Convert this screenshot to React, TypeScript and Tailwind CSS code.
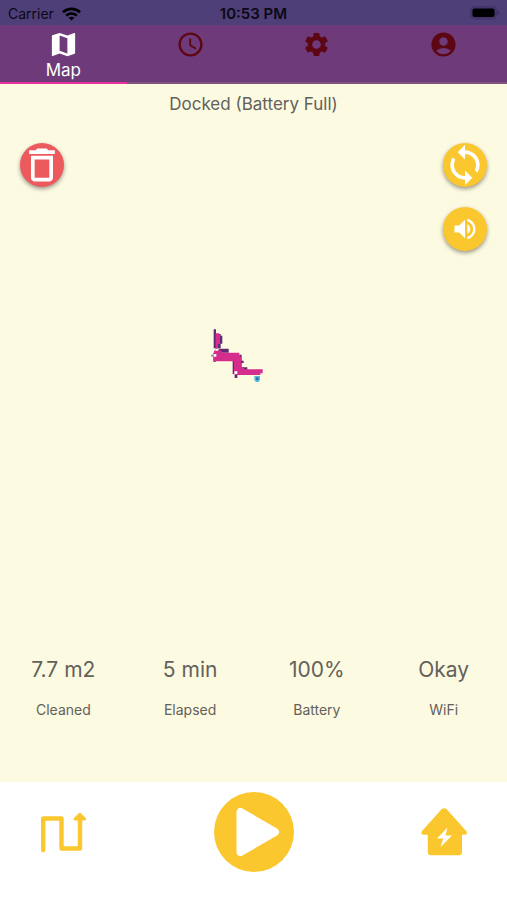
import React from 'react';
import {
  MdAccessTime,
  MdAccountCircle,
  MdDeleteOutline,
  MdLoop,
  MdMap,
  MdSettings,
  MdVolumeUp,
} from 'react-icons/md';

const stats = [
  { value: '7.7 m2', label: 'Cleaned' },
  { value: '5 min', label: 'Elapsed' },
  { value: '100%', label: 'Battery' },
  { value: 'Okay', label: 'WiFi' },
];

const idleTabs = [
  { name: 'Schedule', Icon: MdAccessTime },
  { name: 'Settings', Icon: MdSettings },
  { name: 'Account', Icon: MdAccountCircle },
];

function StatusBar() {
  return (
    <div className="grid h-[25px] grid-cols-3 items-center bg-[#4f3f78] px-2 text-sm text-[#0b0814]">
      <div className="flex items-center gap-2 pt-0.5">
        <span>Carrier</span>
        <svg width="19" height="14" viewBox="0 0 19 14" fill="none" stroke="#000" strokeWidth="2.6" aria-hidden="true">
          <path d="M1 5.2C5.800.7 13.200.7 18 5.200" />
          <path d="M4.200 8.600c3-2.800 7.600-2.800 10.600 0" />
          <path d="M9.500 13.600 6.600 10.800c1.700-1.400 4.100-1.400 5.800 0z" fill="#000" stroke="none" />
        </svg>
      </div>
      <span className="pt-0.5 text-center text-[15px] font-semibold whitespace-nowrap">10:53 PM</span>
      <svg className="justify-self-end" width="29" height="14" viewBox="0 0 29 14" aria-hidden="true">
        <rect x="0.5" y="0.5" width="26" height="12.5" rx="4" fill="#43356a" stroke="#43356a" />
        <rect x="2.5" y="2.5" width="22" height="8.5" rx="2" fill="#000" />
        <path d="M27.500 4.500c1.800.6 1.800 4 0 4.600z" fill="#352a55" />
      </svg>
    </div>
  );
}

function TabBar() {
  return (
    <nav className="grid h-[59px] grid-cols-4 bg-[#6e3a79]">
      <button type="button" className="flex flex-col items-center border-b-2 border-[#e6339a] pt-1 text-white">
        <MdMap size={31} />
        <span className="text-[17px] leading-5">Map</span>
      </button>
      {idleTabs.map(({ name, Icon }) => (
        <button key={name} type="button" aria-label={name} className="flex justify-center border-b-2 border-[#815180] pt-[5px] text-[#5c0713]">
          <Icon size={29} />
        </button>
      ))}
    </nav>
  );
}

function CleaningMap() {
  return (
    <svg width="75" height="70" viewBox="0 0 225 210" role="img" aria-label="Cleaned area">
      <path
        fill="#5f2b73"
        d="M41 28h7v14h14v5h5v24h-5v14H41zM56 86h30v12H56zM40 98h8v27h-8zM98 120h8v42h-8zM118 104h7v18h6v7h-6v13h17v8h-24zM104 158h8v16h-8z"
      />
      <path fill="#d52d8d" d="M47 40h10l3 8v24h-6v18h7l7 8h50v8l5 5v31h9v6h56v12h-7v5H104v-6h-2v-35H42V92h5z" />
      <path fill="#8f78ae" d="M34 104h7v6h-7z" />
      <path fill="#fff" d="M41 102h8v8h-8zM48 86h6v6h-6zM103 154h9v8h-9z" />
      <path fill="#54b7dc" d="M163 168h17v12l-5 6h-7l-5-6z" />
      <path fill="#286fae" d="M168 172h7v8h-7z" />
    </svg>
  );
}

export default function App() {
  const round =
    'flex size-11 items-center justify-center rounded-full text-white shadow-[0_2px_4px_rgba(0,0,0,0.4)]';
  return (
    <div className="flex min-h-screen flex-col bg-[#fdfae2] font-['Inter','Liberation_Sans',sans-serif] text-[#62615a]">
      <header>
        <StatusBar />
        <TabBar />
      </header>

      <main className="flex flex-1 flex-col">
        <h1 className="pt-2 text-center text-[17px] leading-6">Docked (Battery Full)</h1>

        <div className="flex items-start justify-between px-5 pt-[27px]">
          <button type="button" aria-label="Clear map" className={`${round} bg-[#ec5a5e]`}>
            <MdDeleteOutline size={44} />
          </button>
          <div className="flex flex-col gap-5">
            <button type="button" aria-label="Refresh map" className={`${round} bg-[#fac72f]`}>
              <MdLoop size={44} />
            </button>
            <button type="button" aria-label="Find robot" className={`${round} bg-[#fac72f]`}>
              <MdVolumeUp size={28} />
            </button>
          </div>
        </div>

        <div className="flex flex-1 justify-center pt-[69px] pr-8">
          <CleaningMap />
        </div>

        <dl className="grid grid-cols-4 pb-[60px] text-center">
          {stats.map((s) => (
            <div key={s.label} className="flex flex-col-reverse gap-3">
              <dt className="text-sm leading-6">{s.label}</dt>
              <dd className="text-[21px] leading-8">{s.value}</dd>
            </div>
          ))}
        </dl>
      </main>

      <footer className="flex items-center justify-between bg-white px-10 pt-2.5 pb-7">
        <button type="button" aria-label="Cleaning route">
          <svg width="46" height="44" viewBox="0 0 46 44" fill="none" stroke="#fac72f" strokeWidth="4.4" strokeLinecap="round" strokeLinejoin="round">
            <path d="M3.2 40V8.5H21.500V38.500H40V10" />
            <path d="M39.800 4.400 35 9H44.600z" fill="#fac72f" strokeWidth="3" />
          </svg>
        </button>
        <button type="button" aria-label="Start cleaning">
          <svg width="80" height="80" viewBox="0 0 80 80">
            <circle cx="40" cy="40" r="40" fill="#fac72f" />
            <path d="M26.500 20V60L61 40z" fill="#fff" stroke="#fff" strokeWidth="8" strokeLinejoin="round" />
          </svg>
        </button>
        <button type="button" aria-label="Return to dock">
          <svg width="46" height="48" viewBox="0 0 46 48">
            <path
              d="M20.500 1.200a4.200 4.200 0 0 1 5.200 0L45.200 23c1.300 1.600.6 3.700-1.400 3.700H41V44a3.200 3.200 0 0 1-3.200 3.200H10A3.200 3.200 0 0 1 6.800 44V26.700H2.500C.4 26.700-.3 24.600 1 23z"
              fill="#fac72f"
            />
            <path d="M26.500 19.500 16 30.500h6.200l-2.700 8.500L31 27.500h-6.500z" fill="#fff" />
          </svg>
        </button>
      </footer>
    </div>
  );
}
